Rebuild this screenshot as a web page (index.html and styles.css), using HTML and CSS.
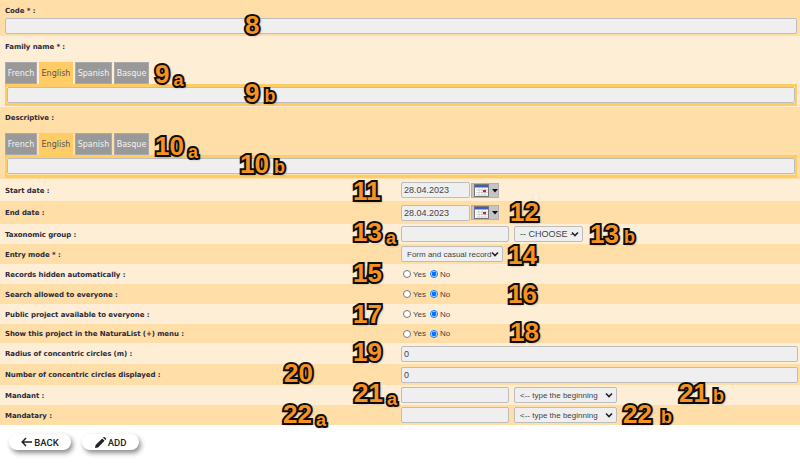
FILE: index.html
```html
<!DOCTYPE html>
<html lang="en">
<head>
<meta charset="utf-8">
<title>Project form</title>
<link rel="stylesheet" href="styles.css">
</head>
<body>
<form class="form">
  <div class="stack dark code-row">
    <div class="label">Code * :</div>
    <input class="field wide" type="text">
  </div>
  <div class="stack light lang-row">
    <div class="label">Family name * :</div>
    <div class="tabs"><span class="tab">French</span><span class="tab on">English</span><span class="tab">Spanish</span><span class="tab">Basque</span></div>
    <div class="panel"><input class="field wide" type="text"></div>
  </div>
  <div class="stack dark lang-row last">
    <div class="label">Descriptive :</div>
    <div class="tabs"><span class="tab">French</span><span class="tab on">English</span><span class="tab">Spanish</span><span class="tab">Basque</span></div>
    <div class="panel"><input class="field wide" type="text"></div>
  </div>

  <div class="row light h22"><div class="label">Start date :</div><div class="value"><input class="field date" type="text" value="28.04.2023"><span class="cal"><svg width="28" height="15" viewBox="0 0 28 15"><rect x="3.5" y="1.5" width="14" height="12" fill="#fff" stroke="#777"/><rect x="4" y="2" width="13" height="2.5" fill="#3a5fc0"/><path d="M5 7h12M5 9.5h12M5 12h12M8 5v8M11 5v8M14 5v8" stroke="#bbb" stroke-width=".6"/><rect x="12" y="7" width="3" height="2.2" fill="#d81e1e"/><path d="M21 6h6l-3 3.5z" fill="#111"/></svg></span></div></div>
  <div class="row dark h23"><div class="label">End date :</div><div class="value"><input class="field date" type="text" value="28.04.2023"><span class="cal"><svg width="28" height="15" viewBox="0 0 28 15"><rect x="3.5" y="1.5" width="14" height="12" fill="#fff" stroke="#777"/><rect x="4" y="2" width="13" height="2.5" fill="#3a5fc0"/><path d="M5 7h12M5 9.5h12M5 12h12M8 5v8M11 5v8M14 5v8" stroke="#bbb" stroke-width=".6"/><rect x="12" y="7" width="3" height="2.2" fill="#d81e1e"/><path d="M21 6h6l-3 3.5z" fill="#111"/></svg></span></div></div>
  <div class="row light h20"><div class="label">Taxonomic group :</div><div class="value"><input class="field short" type="text"><select class="pick choose"><option>-- CHOOSE --</option></select></div></div>
  <div class="row dark h20"><div class="label">Entry mode * :</div><div class="value"><select class="pick mode"><option>Form and casual record</option></select></div></div>
  <div class="row light h20"><div class="label">Records hidden automatically :</div><div class="value"><label class="opt"><input type="radio" name="r1">Yes</label><label class="opt"><input type="radio" name="r1" checked>No</label></div></div>
  <div class="row dark h20"><div class="label">Search allowed to everyone :</div><div class="value"><label class="opt"><input type="radio" name="r2">Yes</label><label class="opt"><input type="radio" name="r2" checked>No</label></div></div>
  <div class="row light h20"><div class="label">Public project available to everyone :</div><div class="value"><label class="opt"><input type="radio" name="r3">Yes</label><label class="opt"><input type="radio" name="r3" checked>No</label></div></div>
  <div class="row dark h19"><div class="label">Show this project in the NaturaList (+) menu :</div><div class="value"><label class="opt"><input type="radio" name="r4">Yes</label><label class="opt"><input type="radio" name="r4" checked>No</label></div></div>
  <div class="row light h21"><div class="label">Radius of concentric circles (m) :</div><div class="value"><input class="field full" type="text" value="0"></div></div>
  <div class="row dark h21"><div class="label">Number of concentric circles displayed :</div><div class="value"><input class="field full" type="text" value="0"></div></div>
  <div class="row light h20"><div class="label">Mandant :</div><div class="value"><input class="field short" type="text"><select class="pick begin"><option>&lt;-- type the beginning</option></select></div></div>
  <div class="row dark h20"><div class="label">Mandatary :</div><div class="value"><input class="field short" type="text"><select class="pick begin"><option>&lt;-- type the beginning</option></select></div></div>

  <div class="actions">
    <button class="btn back" type="button"><svg width="11" height="10" viewBox="0 0 11 10"><path d="M5 1 1.2 5 5 9M1.5 5H11" fill="none" stroke="#222" stroke-width="1.5"/></svg>BACK</button>
    <button class="btn add" type="button"><svg width="11" height="11" viewBox="0 0 11 11"><path d="M0 11l.6-3L7.2 1.4l2.4 2.4L3 10.4zM8 .6l.6-.6c.3-.2.6-.2.9 0l1.5 1.5c.2.3.2.6 0 .9l-.6.6z" fill="#222"/></svg>ADD</button>
  </div>
</form>

<div class="notes">
  <span class="note n8">8</span>
  <span class="note n9a">9<small class="low">a</small></span>
  <span class="note n9b">9<small>b</small></span>
  <span class="note n10a">10<small class="low">a</small></span>
  <span class="note n10b">10<small>b</small></span>
  <span class="note n11">11</span>
  <span class="note n12">12</span>
  <span class="note n13a">13<small class="low">a</small></span>
  <span class="note n13b">13<small>b</small></span>
  <span class="note n14">14</span>
  <span class="note n15">15</span>
  <span class="note n16">16</span>
  <span class="note n17">17</span>
  <span class="note n18">18</span>
  <span class="note n19">19</span>
  <span class="note n20">20</span>
  <span class="note n21a">21<small class="low">a</small></span>
  <span class="note n21b">21<small>b</small></span>
  <span class="note n22a">22<small class="low">a</small></span>
  <span class="note n22b">22<small class="far">b</small></span>
</div>
</body>
</html>
```
FILE: styles.css
```css
* { box-sizing: border-box; }
html, body { margin: 0; padding: 0; }
body {
  position: relative;
  width: 800px;
  height: 464px;
  overflow: hidden;
  background: #fff;
  font-family: "DejaVu Sans", sans-serif;
  color: #2a2a3a;
}
.dark { background: #ffdea8; }
.light { background: #feeed6; }

.label {
  padding-top: 1px;
  font-size: 7px;
  font-weight: 700;
  line-height: 10px;
  letter-spacing: -.08px;
  color: #2b2b3b;
}

.stack { padding: 5px 3px 0 5px; }
.stack .label { height: 10px; padding-top: 1px; }
.code-row { height: 36px; }
.code-row .label { margin-bottom: 3px; }
.lang-row { height: 71px; }
.lang-row.last { height: 72px; }

.tabs { display: flex; gap: 2px; margin-top: 11px; height: 22px; }
.tab {
  display: flex;
  align-items: center;
  justify-content: center;
  width: 32px;
  background: #999;
  color: #f4f4f4;
  font-size: 8px;
  border: 1px solid #aaa;
}
.tab:nth-child(2) { width: 34px; }
.tab:nth-child(3) { width: 37px; }
.tab:nth-child(4) { width: 35px; }
.tab.on { background: #ffcc66; border-color: #ffcc66; color: #555; }
.panel { height: 22px; border: solid #ffcc66; border-width: 3px 2px; }
.last .panel { height: 23px; }

.field {
  display: block;
  height: 16px;
  margin: 0;
  padding: 0 2px;
  background: #efefef;
  border: 1px solid #bdbdbd;
  border-radius: 2px;
  font: 9px "Liberation Sans", sans-serif;
  color: #444;
  outline: none;
}
.wide { width: 100%; }
.full { width: 397px; }
.short { width: 108px; }
.date { width: 69px; }

.row {
  display: grid;
  grid-template-columns: 401px 1fr;
  align-items: center;
  padding-left: 5px;
}
.row .label { grid-column: 1; }
.value { display: flex; align-items: center; margin-left: -5px; }
.h23 { height: 23px; }
.h22 { height: 22px; }
.h21 { height: 21px; }
.h20 { height: 20px; }
.h19 { height: 19px; }

.cal {
  display: block;
  width: 28px;
  height: 15px;
  margin-left: 1px;
  background: #c4c4c4;
  outline: 1px solid #b0b0b0;
  outline-offset: -1px;
  line-height: 0;
}

.pick {
  appearance: none;
  height: 16px;
  margin: 0;
  padding: 0 0 0 5px;
  background: #efefef url("data:image/svg+xml,%3Csvg xmlns='http://www.w3.org/2000/svg' width='8' height='6' viewBox='0 0 8 6'%3E%3Cpath d='M1 1.5 4 4.5 7 1.5' fill='none' stroke='%23222' stroke-width='1.6'/%3E%3C/svg%3E") no-repeat right 3px center;
  border: 1px solid #bdbdbd;
  border-radius: 2px;
  font: 8px "Liberation Sans", sans-serif;
  color: #444;
}
.short + .pick { margin-left: 5px; }
.choose { width: 69px; font-size: 9px; }
.begin { width: 103px; }
.mode { width: 102px; }

.opt {
  display: flex;
  align-items: center;
  font: 8px "Liberation Sans", sans-serif;
  color: #444;
}
.opt input { width: 8px; height: 8px; margin: 0 2px 0 2px; }
.opt + .opt { margin-left: 2px; }

.actions { display: flex; gap: 11px; padding: 9px 0 0 9px; }
.btn {
  display: flex;
  align-items: center;
  justify-content: center;
  gap: 2px;
  height: 16px;
  padding: 0;
  border: 0;
  border-radius: 8px;
  background: #fff;
  box-shadow: 2px 3px 5px rgba(0, 0, 0, .45);
  font: 500 9.5px Roboto, sans-serif;
  color: #222;
}
.back { width: 62px; }
.add { width: 57px; }

.note {
  position: absolute;
  display: block;
  white-space: nowrap;
  font: 700 26px/26px "Liberation Sans", sans-serif;
  color: #f7931e;
  -webkit-text-stroke: 4px #111;
  paint-order: stroke fill;
  text-shadow: 1px 1px 3px rgba(0, 0, 0, .8);
}
.note small { font-size: 18px; margin-left: 5px; }
.note small.low { vertical-align: -3px; margin-left: 4px; }
.note small.far { margin-left: 9px; }
.n8 { left: 245px; top: 12px; }
.n9a { left: 155px; top: 61px; }
.n9b { left: 245px; top: 80px; }
.n10a { left: 155px; top: 133px; }
.n10b { left: 240px; top: 151px; }
.n11 { left: 353px; top: 178px; }
.n12 { left: 510px; top: 199px; }
.n13a { left: 353px; top: 219px; }
.n13b { left: 590px; top: 221px; }
.n14 { left: 508px; top: 242px; }
.n15 { left: 353px; top: 260px; }
.n16 { left: 508px; top: 281px; }
.n17 { left: 353px; top: 301px; }
.n18 { left: 510px; top: 319px; }
.n19 { left: 353px; top: 339px; }
.n20 { left: 284px; top: 360px; }
.n21a { left: 354px; top: 380px; }
.n21b { left: 679px; top: 380px; }
.n22a { left: 283px; top: 401px; }
.n22b { left: 623px; top: 401px; }
```
